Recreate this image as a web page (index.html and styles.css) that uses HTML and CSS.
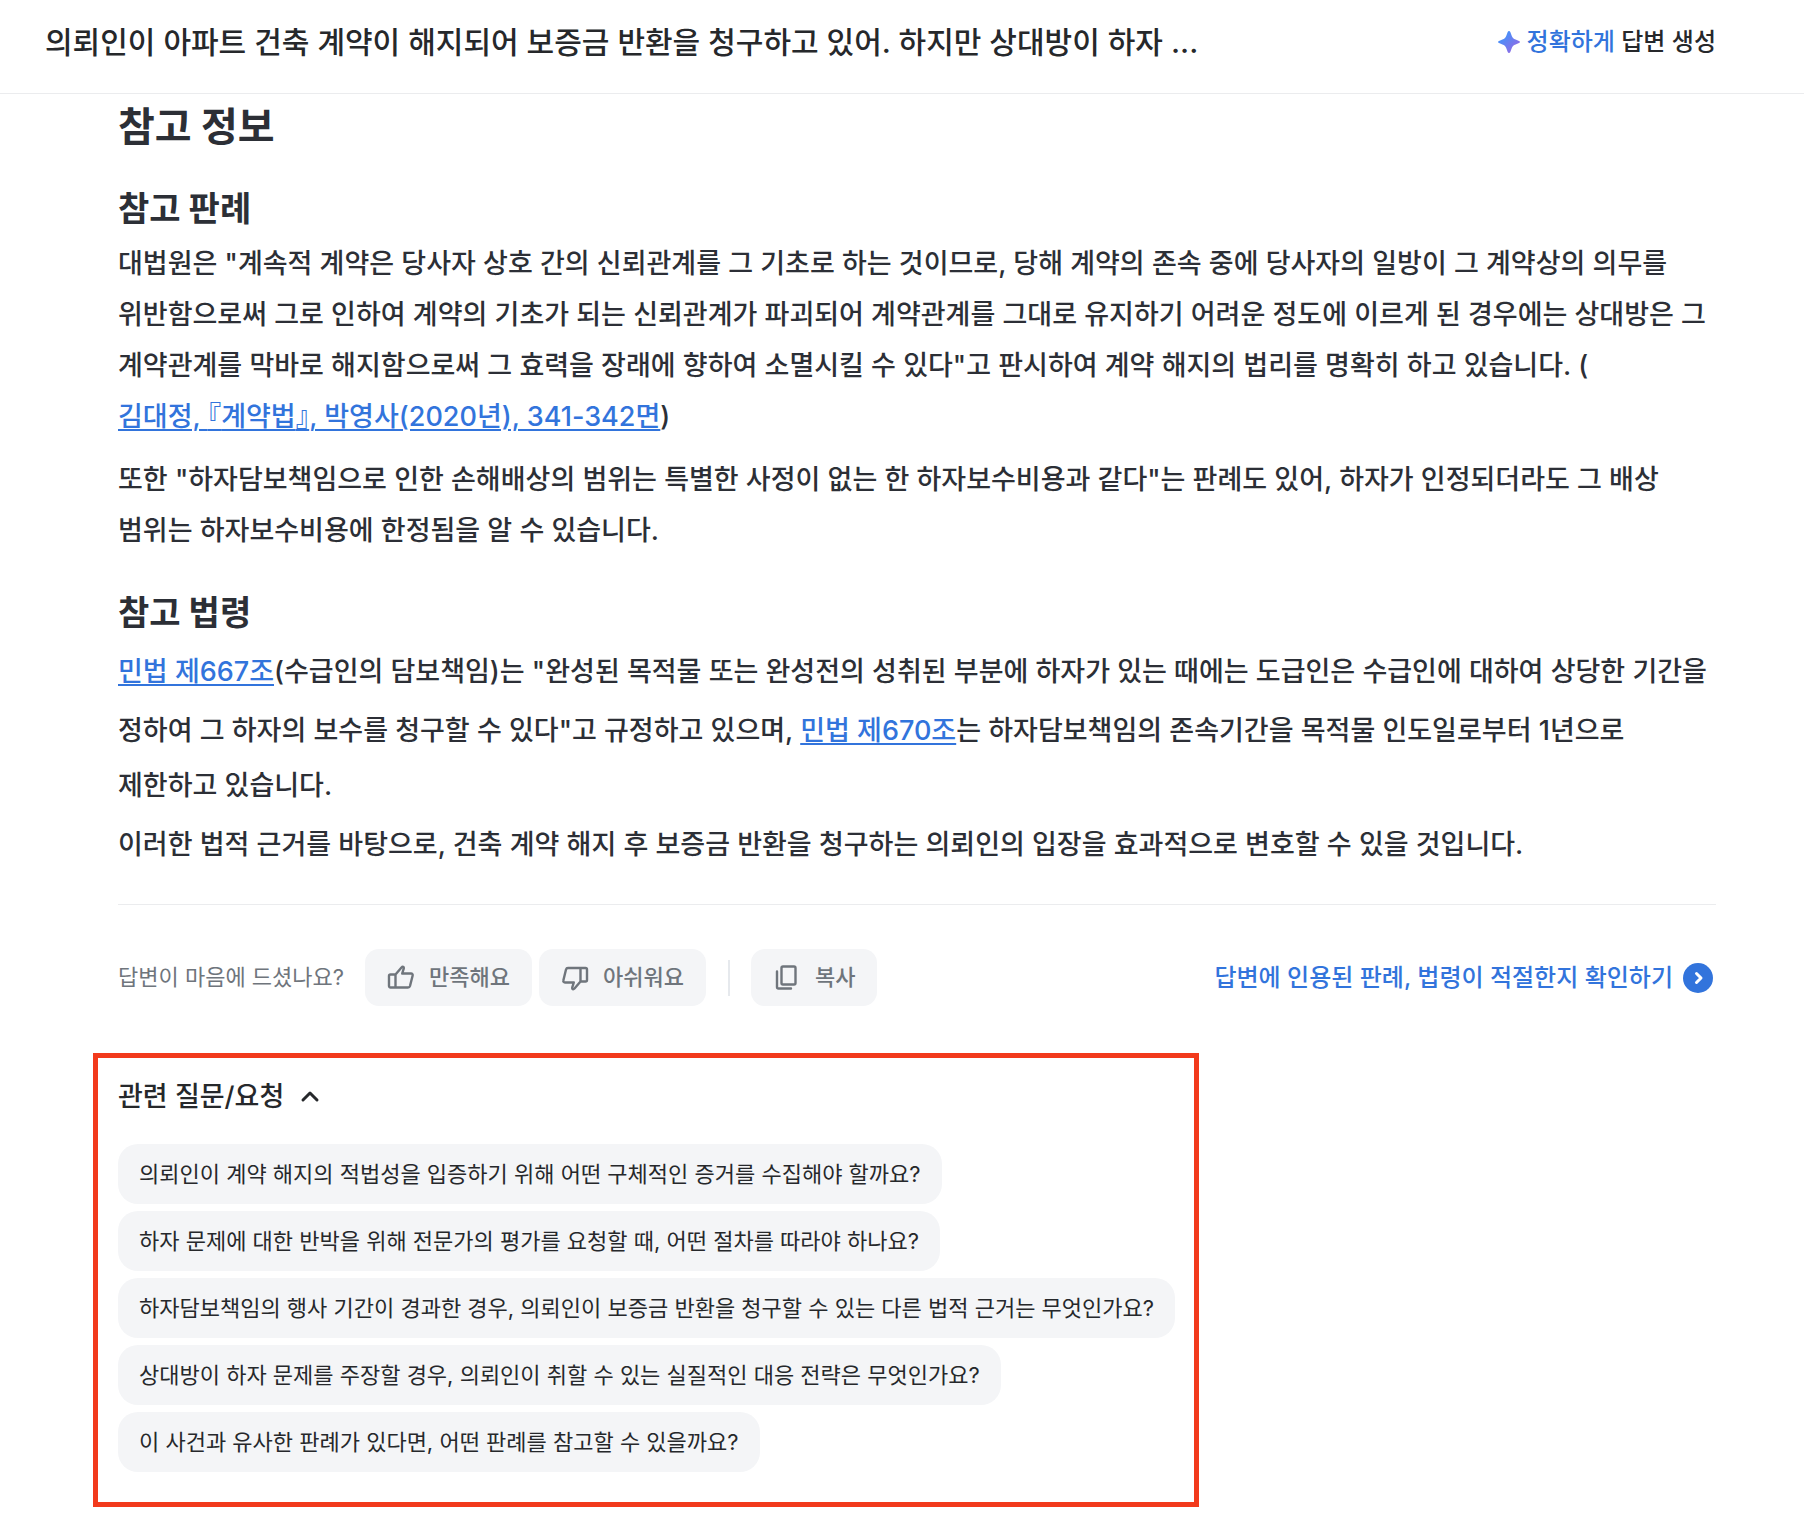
FILE: index.html
```html
<!DOCTYPE html>
<html lang="ko">
<head>
<meta charset="utf-8">
<meta name="viewport" content="width=device-width, initial-scale=1">
<title>답변 상세</title>
<link rel="stylesheet" href="styles.css">
</head>
<body>
<header class="topbar">
  <h1 class="topbar-title">의뢰인이 아파트 건축 계약이 해지되어 보증금 반환을 청구하고 있어. 하지만 상대방이 하자 ...</h1>
  <p class="mode">
    <svg class="mode-icon" viewBox="0 0 22 22" aria-hidden="true">
      <defs><linearGradient id="spark" x1="0" y1="0" x2="1" y2="1"><stop offset="0.2" stop-color="#4491fa"/><stop offset="0.8" stop-color="#8c6de6"/></linearGradient></defs>
      <path fill="url(#spark)" d="M11 0c.6 0 1 .4 1.300 1.100l1.500 3.800c.8 2 1.800 2.800 3.800 3.600l3.400 1.400c.7.300 1 .6 1 1.100s-.3.800-1 1.100l-3.400 1.400c-2 .8-3 1.600-3.800 3.600l-1.500 3.800c-.3.700-.7 1.100-1.300 1.100s-1-.4-1.300-1.100l-1.500-3.800c-.8-2-1.800-2.800-3.800-3.600L1 12.100c-.7-.3-1-.6-1-1.100s.3-.8 1-1.100l3.400-1.400c2-.8 3-1.600 3.800-3.600l1.500-3.800C10 .4 10.400 0 11 0z"/>
    </svg>
    <span><em class="mode-name">정확하게</em> 답변 생성</span>
  </p>
</header>
<main class="page">
  <article class="answer">
    <h2 class="answer-title">참고 정보</h2>
    <section class="reference">
      <h3 class="reference-title">참고 판례</h3>
      <p class="text">대법원은 "계속적 계약은 당사자 상호 간의 신뢰관계를 그 기초로 하는 것이므로, 당해 계약의 존속 중에 당사자의 일방이 그 계약상의 의무를 위반함으로써 그로 인하여 계약의 기초가 되는 신뢰관계가 파괴되어 계약관계를 그대로 유지하기 어려운 정도에 이르게 된 경우에는 상대방은 그 계약관계를 막바로 해지함으로써 그 효력을 장래에 향하여 소멸시킬 수 있다"고 판시하여 계약 해지의 법리를 명확히 하고 있습니다. (<a class="cite" href="#book">김대정, <span class="bracket">『</span>계약법<span class="bracket">』</span>, 박영사(2020년), 341-342면</a>)</p>
      <p class="text text-next">또한 "하자담보책임으로 인한 손해배상의 범위는 특별한 사정이 없는 한 하자보수비용과 같다"는 판례도 있어, 하자가 인정되더라도 그 배상 범위는 하자보수비용에 한정됨을 알 수 있습니다.</p>
    </section>
    <section class="reference">
      <h3 class="reference-title">참고 법령</h3>
      <p class="text"><a class="cite statute" href="#law-667">민법 제667조</a>(수급인의 담보책임)는 "완성된 목적물 또는 완성전의 성취된 부분에 하자가 있는 때에는 도급인은 수급인에 대하여 상당한 기간을 정하여 그 하자의 보수를 청구할 수 있다"고 규정하고 있으며, <a class="cite statute" href="#law-670">민법 제670조</a>는 하자담보책임의 존속기간을 목적물 인도일로부터 1년으로 제한하고 있습니다.</p>
      <p class="text text-close">이러한 법적 근거를 바탕으로, 건축 계약 해지 후 보증금 반환을 청구하는 의뢰인의 입장을 효과적으로 변호할 수 있을 것입니다.</p>
    </section>
    <footer class="feedback">
      <p class="feedback-label">답변이 마음에 드셨나요?</p>
      <div class="feedback-actions">
        <button class="action" type="button">
          <svg class="action-icon" viewBox="0 0 28 28" aria-hidden="true"><path d="M8.500 10.500 14.500 3.500c1.200-1.300 2.600-.6 2.300.8L15.200 9.500H24c1.300 0 2 1 1.600 2.200L23 22c-.3 1-1 1.500-2 1.500H3.500c-.8 0-1.500-.6-1.500-1.500V12c0-.9.700-1.500 1.500-1.500h5zv13"/></svg>
          만족해요
        </button>
        <button class="action" type="button">
          <svg class="action-icon" viewBox="0 0 28 28" aria-hidden="true"><path d="M19.500 17.500 13.500 24.500c-1.200 1.300-2.600.6-2.300-.8L12.800 18.500H4c-1.300 0-2-1-1.600-2.200L5 5.500C5.300 4.500 6 4 7 4h17.500c.8 0 1.500.6 1.500 1.500V16c0 .9-.7 1.500-1.500 1.500h-5zV4"/></svg>
          아쉬워요
        </button>
      </div>
      <span class="separator"></span>
      <button class="action" type="button">
        <svg class="action-icon" viewBox="0 0 28 28" aria-hidden="true"><rect x="8.500" y="2.500" width="14" height="18" rx="1.500"/><path d="M4 7.500V23c0 1 .6 1.500 1.500 1.500H18"/></svg>
        복사
      </button>
      <a class="verify" href="#verify">답변에 인용된 판례, 법령이 적절한지 확인하기
        <svg class="verify-icon" viewBox="0 0 30 30" aria-hidden="true"><circle cx="15" cy="15" r="15"/><path d="m13.500 10.500 4.500 4.500-4.500 4.500"/></svg>
      </a>
    </footer>
  </article>
  <section class="related">
    <h2 class="related-heading">
      <button class="related-toggle" type="button" aria-expanded="true">관련 질문/요청
        <svg class="related-icon" viewBox="0 0 20 14" aria-hidden="true"><path d="m3 10 7-7 7 7"/></svg>
      </button>
    </h2>
    <ul class="questions">
      <li><button class="question" type="button">의뢰인이 계약 해지의 적법성을 입증하기 위해 어떤 구체적인 증거를 수집해야 할까요?</button></li>
      <li><button class="question" type="button">하자 문제에 대한 반박을 위해 전문가의 평가를 요청할 때, 어떤 절차를 따라야 하나요?</button></li>
      <li><button class="question" type="button">하자담보책임의 행사 기간이 경과한 경우, 의뢰인이 보증금 반환을 청구할 수 있는 다른 법적 근거는 무엇인가요?</button></li>
      <li><button class="question" type="button">상대방이 하자 문제를 주장할 경우, 의뢰인이 취할 수 있는 실질적인 대응 전략은 무엇인가요?</button></li>
      <li><button class="question" type="button">이 사건과 유사한 판례가 있다면, 어떤 판례를 참고할 수 있을까요?</button></li>
    </ul>
  </section>
</main>
</body>
</html>
```
FILE: styles.css
```css
* { box-sizing: border-box; }

body {
  margin: 0;
  background: #fff;
  color: #2c2f36;
  font-family: Inter, "Noto Sans CJK KR", sans-serif;
  font-size: 27px;
  word-break: keep-all;
}

h1, h2, h3, p, ul { margin: 0; padding: 0; }
ul { list-style: none; }
a { color: #3274dc; }

button {
  border: 0;
  background: none;
  color: inherit;
  font: inherit;
  cursor: pointer;
}

.topbar {
  display: flex;
  align-items: center;
  justify-content: space-between;
  gap: 40px;
  padding: 20px 88px 29px 45px;
  border-bottom: 1px solid #ebecee;
  color: #26282b;
}

.topbar-title {
  font-size: 30px;
  font-weight: 500;
  line-height: 44px;
}

.mode {
  display: flex;
  align-items: center;
  gap: 7px;
  font-size: 24px;
  font-weight: 500;
  line-height: 36px;
  white-space: nowrap;
}

.mode-icon { width: 22px; height: 22px; }
.mode-name { color: #3274dc; font-style: normal; }

.page { padding: 0 88px 13px 93px; }
.answer { padding-left: 25px; }

.answer-title {
  padding: 9px 0 1px;
  font-size: 40px;
  font-weight: 700;
  line-height: 48px;
}

.reference { padding-top: 33px; }

.reference-title {
  padding-bottom: 5px;
  font-size: 34px;
  font-weight: 700;
  line-height: 48px;
}

.text { font-weight: 500; line-height: 51px; }
.text-next { margin-top: 12px; }
.text-close { margin-top: 8px; }

.cite {
  display: inline-block;
  text-decoration-thickness: 2px;
  text-underline-offset: 3px;
}

.statute { margin: 4px 0; }
.bracket { font-feature-settings: "halt"; }

.feedback {
  display: flex;
  align-items: center;
  margin-top: 34px;
  padding: 44px 0 47px;
  border-top: 1px solid #ebecee;
  color: #6f757c;
  font-size: 22px;
  line-height: 33px;
}

.feedback-label { margin-right: 21px; }
.feedback-actions { display: flex; gap: 7px; }

.action {
  display: flex;
  align-items: center;
  gap: 14px;
  padding: 12px 22px;
  border-radius: 14px;
  background: #f4f5f7;
  font-weight: 500;
}

.action-icon {
  width: 28px;
  height: 28px;
  fill: none;
  stroke: currentColor;
  stroke-width: 2.4;
  stroke-linejoin: round;
  stroke-linecap: round;
}

.separator {
  width: 2px;
  height: 36px;
  margin: 0 21px 0 22px;
  background: #e6e9ed;
}

.verify {
  display: flex;
  align-items: center;
  gap: 10px;
  margin-left: auto;
  padding-right: 3px;
  font-size: 24px;
  font-weight: 500;
  text-decoration: none;
}

.verify-icon { width: 30px; height: 30px; fill: currentColor; }

.verify-icon path {
  fill: none;
  stroke: #fff;
  stroke-width: 3;
  stroke-linecap: round;
  stroke-linejoin: round;
}

.related {
  width: fit-content;
  padding: 18px 19px 30px 20px;
  border: 5px solid #f23a1c;
  color: #26282b;
}

.related-heading { font-size: 27px; font-weight: 500; }

.related-toggle {
  display: flex;
  align-items: center;
  gap: 16px;
  padding: 0;
  line-height: 42px;
}

.related-icon {
  width: 20px;
  height: 14px;
  fill: none;
  stroke: currentColor;
  stroke-width: 3;
  stroke-linecap: round;
  stroke-linejoin: round;
}

.questions {
  display: flex;
  flex-direction: column;
  gap: 7px;
  margin-top: 26px;
}

.questions li { display: flex; }

.question {
  padding: 13px 21px;
  border-radius: 20px;
  background: #f4f5f7;
  font-size: 22px;
  line-height: 34px;
  text-align: left;
}
```
